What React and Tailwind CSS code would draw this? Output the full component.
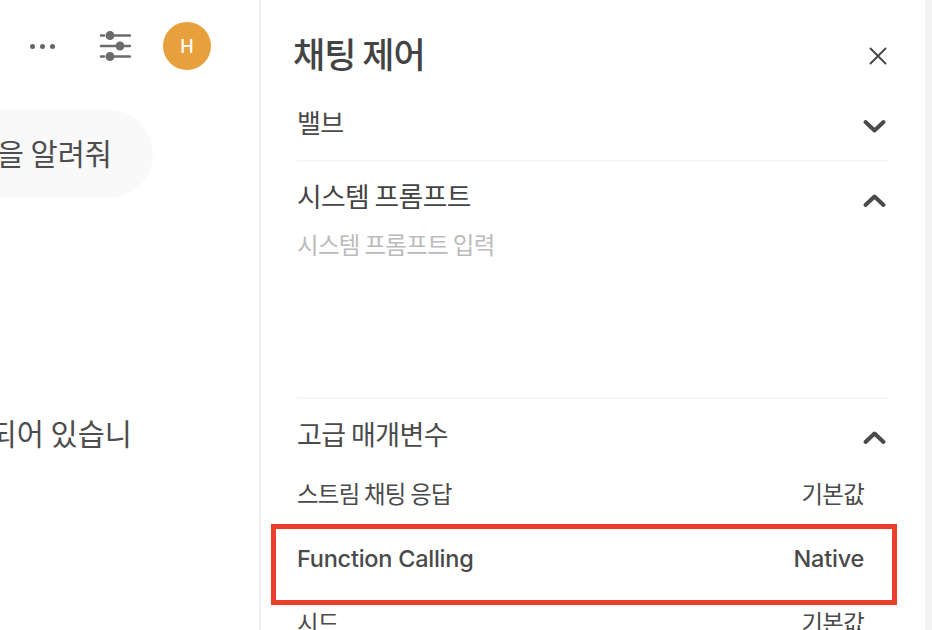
const font = { fontFamily: '"Noto Sans CJK KR", sans-serif' };

function Chevron({ up }) {
  return (
    <svg width="26" height="18" viewBox="0 0 26 18" fill="none" stroke="#4a4a4a" strokeWidth="4" strokeLinecap="round" strokeLinejoin="round">
      <path d={up ? "M4.5 13 L13.500 4.5 L22.500 13" : "M4.5 5 L13.500 13.500 L22.500 5"} />
    </svg>
  );
}

function Sliders() {
  return (
    <svg width="32" height="32" viewBox="0 0 32 32" fill="#6b6b6b" stroke="#6b6b6b" strokeWidth="2.500" strokeLinecap="round">
      <path d="M2 5.500H5M16 5.500H31M2 16H16M26 16H31M2 26.500H5M16 26.500H31" fill="none" />
      <circle cx="11" cy="5.500" r="3.200" />
      <circle cx="21" cy="16" r="3.200" />
      <circle cx="11" cy="26.500" r="3.200" />
    </svg>
  );
}

function Row({ label, value, latin, top }) {
  return (
    <div
      className={"flex h-[64px] items-start justify-between pr-6 text-[#4a4a4a] " + (latin ? "text-[23.500px] leading-[36px] font-medium tracking-[-0.25px]" : "text-[23.400px] leading-[36px] tracking-[-0.7px]")}
      style={{ paddingTop: top, fontFamily: latin ? 'Inter, sans-serif' : undefined }}
    >
      <span>{label}</span>
      <span>{value}</span>
    </div>
  );
}

export default function App() {
  return (
    <div className="relative flex h-[630px] w-[932px] overflow-hidden bg-white" style={font}>
      <div className="w-[259px] shrink-0 overflow-hidden">
        <div className="flex h-[92px] items-center justify-end gap-8 pr-[48px]">
          <div className="mr-3 flex gap-[5px]">
            <span className="h-[5px] w-[5px] rounded-full bg-[#666666]" />
            <span className="h-[5px] w-[5px] rounded-full bg-[#666666]" />
            <span className="h-[5px] w-[5px] rounded-full bg-[#666666]" />
          </div>
          <Sliders />
          <div className="flex h-12 w-12 items-center justify-center rounded-full bg-[#e8a03d] text-[18px] font-medium text-white" style={{ fontFamily: "Inter, sans-serif" }}>H</div>
        </div>
        <div className="mt-[18px] flex justify-end pr-[106px]">
          <div className="flex h-[88px] w-[300px] shrink-0 items-center justify-end rounded-[44px] bg-[#f9f9f9] pr-[41px] pb-[4px] text-[29.500px] whitespace-nowrap text-[#4d4d4d]">을 알려줘</div>
        </div>
        <div className="mt-[210px] flex h-[50px] items-center justify-end pr-[127px] pb-[2px] text-[29.500px] whitespace-nowrap text-[#4d4d4d]">되어 있습니</div>
      </div>

      <div className="h-full w-[2px] shrink-0 bg-[#eeeeee]" />

      <div className="w-[664px] shrink-0 pr-[37px] pl-[36px]">
        <div className="-ml-1 flex h-[97px] items-center justify-between pt-[13px]">
          <h1 className="mb-[6px] text-[35px] leading-none font-medium tracking-[-1px] text-[#444444]">채팅 제어</h1>
          <svg width="20" height="20" viewBox="0 0 20 20" stroke="#4a4a4a" strokeWidth="2" strokeLinecap="round" className="mt-[2px]">
            <path d="M2.500 2.500L17.500 17.500M17.500 2.500L2.500 17.500" />
          </svg>
        </div>

        <div className="flex h-[65px] items-start justify-between border-b-2 border-[#f6f6f6] pr-[1px]">
          <span className="text-[26px] leading-[50px] tracking-[-0.6px] text-[#4a4a4a]">밸브</span>
          <span className="mt-[20px]"><Chevron /></span>
        </div>

        <div className="h-[237px] border-b-2 border-[#f6f6f6] pt-[12px]">
          <div className="flex items-start justify-between pr-[1px]">
            <span className="text-[26.800px] leading-[44px] tracking-[-0.6px] text-[#444444]">시스템 프롬프트</span>
            <span className="mt-[18px]"><Chevron up /></span>
          </div>
          <p className="mt-[11px] text-[23.400px] leading-[30px] tracking-[-0.6px] text-[#bbbbbb]">시스템 프롬프트 입력</p>
        </div>

        <div className="flex h-[63px] items-start justify-between pt-[13px] pr-[1px]">
          <span className="text-[27px] leading-[44px] tracking-[-0.6px] text-[#4a4a4a]">고급 매개변수</span>
          <span className="mt-[17px]"><Chevron up /></span>
        </div>

        <Row top={13} label="스트림 채팅 응답" value="기본값" />
        <Row top={15} latin label="Function Calling" value="Native" />
        <Row top={14} label="시드" value="기본값" />
      </div>

      <div className="flex-1 bg-[#f3f3f3]" />

      <div className="absolute top-[524px] left-[271px] h-[81px] w-[626px] border-[5px] border-[#e8402a]" />
    </div>
  );
}
